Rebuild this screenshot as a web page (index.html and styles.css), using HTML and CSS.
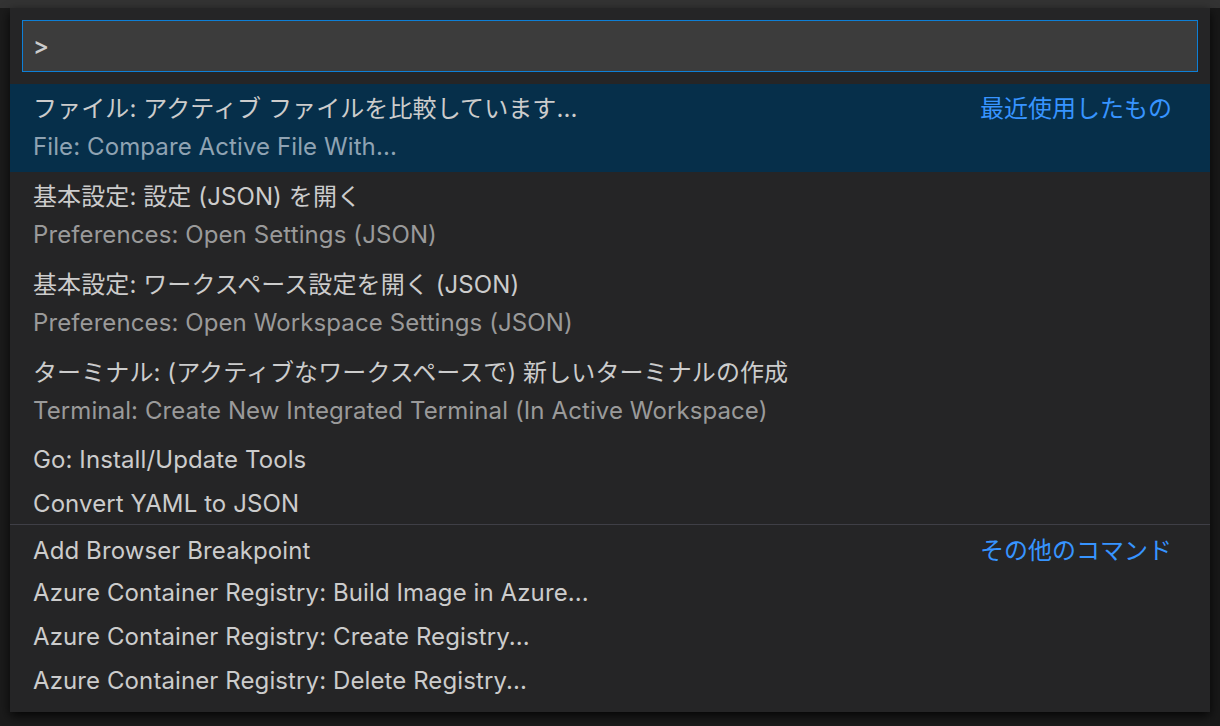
FILE: index.html
```html
<!DOCTYPE html>
<html lang="ja">
<head>
<meta charset="utf-8">
<link rel="stylesheet" href="styles.css">
</head>
<body>
<div class="topstrip"></div>
<div class="stage">
  <div class="palette">
    <div class="input-wrap">
      <div class="input">&gt;</div>
    </div>
    <div class="list">
      <div class="row two selected">
        <div class="line main"><span>ファイル: アクティブ ファイルを比較しています...</span><span class="tag">最近使用したもの</span></div>
        <div class="line desc">File: Compare Active File With...</div>
      </div>
      <div class="row two">
        <div class="line main"><span>基本設定: 設定 (JSON) を開く</span></div>
        <div class="line desc">Preferences: Open Settings (JSON)</div>
      </div>
      <div class="row two">
        <div class="line main"><span>基本設定: ワークスペース設定を開く (JSON)</span></div>
        <div class="line desc">Preferences: Open Workspace Settings (JSON)</div>
      </div>
      <div class="row two">
        <div class="line main"><span>ターミナル: (アクティブなワークスペースで) 新しいターミナルの作成</span></div>
        <div class="line desc">Terminal: Create New Integrated Terminal (In Active Workspace)</div>
      </div>
      <div class="row one"><div class="line main"><span>Go: Install/Update Tools</span></div></div>
      <div class="row one"><div class="line main"><span>Convert YAML to JSON</span></div></div>
      <div class="row one sep"><div class="line main"><span>Add Browser Breakpoint</span><span class="tag">その他のコマンド</span></div></div>
      <div class="row one"><div class="line main"><span>Azure Container Registry: Build Image in Azure...</span></div></div>
      <div class="row one"><div class="line main"><span>Azure Container Registry: Create Registry...</span></div></div>
      <div class="row one"><div class="line main"><span>Azure Container Registry: Delete Registry...</span></div></div>
    </div>
  </div>
</div>
</body>
</html>
```
FILE: styles.css
```css
* { box-sizing: border-box; }
html, body {
  margin: 0;
  padding: 0;
  width: 1220px;
  height: 726px;
  overflow: hidden;
  background: #161616;
  font-family: "Inter", "Noto Sans CJK JP", sans-serif;
}
.topstrip {
  height: 8px;
  background: #333333;
}
.stage {
  padding-left: 10px;
  background: linear-gradient(90deg, #1b1b1b 0, #1b1b1b 1210px, #181818 1210px);
  height: 718px;
}
.palette {
  width: 1200px;
  height: 704px;
  background: #252526;
  box-shadow: 0 4px 10px rgba(0,0,0,0.8);
  padding-top: 12px;
}
.input-wrap {
  padding: 0 12px;
}
.input {
  height: 52px;
  border: 1px solid #0e7fd6;
  background: #3c3c3c;
  color: #cccccc;
  font-size: 24px;
  font-weight: 500;
  line-height: 50px;
  padding-left: 10px;
}
.list {
  margin-top: 12px;
}
.row {
  padding: 0 38px 0 23px;
  color: #cccccc;
  font-size: 24px;
  letter-spacing: 0.1px;
}
.row.two {
  height: 88px;
  padding-top: 6px;
}
.row.two .line {
  height: 38px;
  line-height: 38px;
}
.row.one {
  height: 44px;
  padding-top: 3px;
}
.row.one .line {
  height: 41px;
  line-height: 41px;
}
.row.sep {
  border-top: 1px solid #3f3f46;
  height: 45px;
  padding-top: 5px;
}
.row.sep .line {
  height: 39px;
}
.line {
  white-space: nowrap;
}
.main {
  display: flex;
  justify-content: space-between;
}
.desc {
  color: #9a9a9a;
}
.selected {
  background: #062f4a;
}
.selected .desc {
  color: #8fa3b3;
}
.tag {
  color: #3794ff;
  letter-spacing: 0;
}
```
